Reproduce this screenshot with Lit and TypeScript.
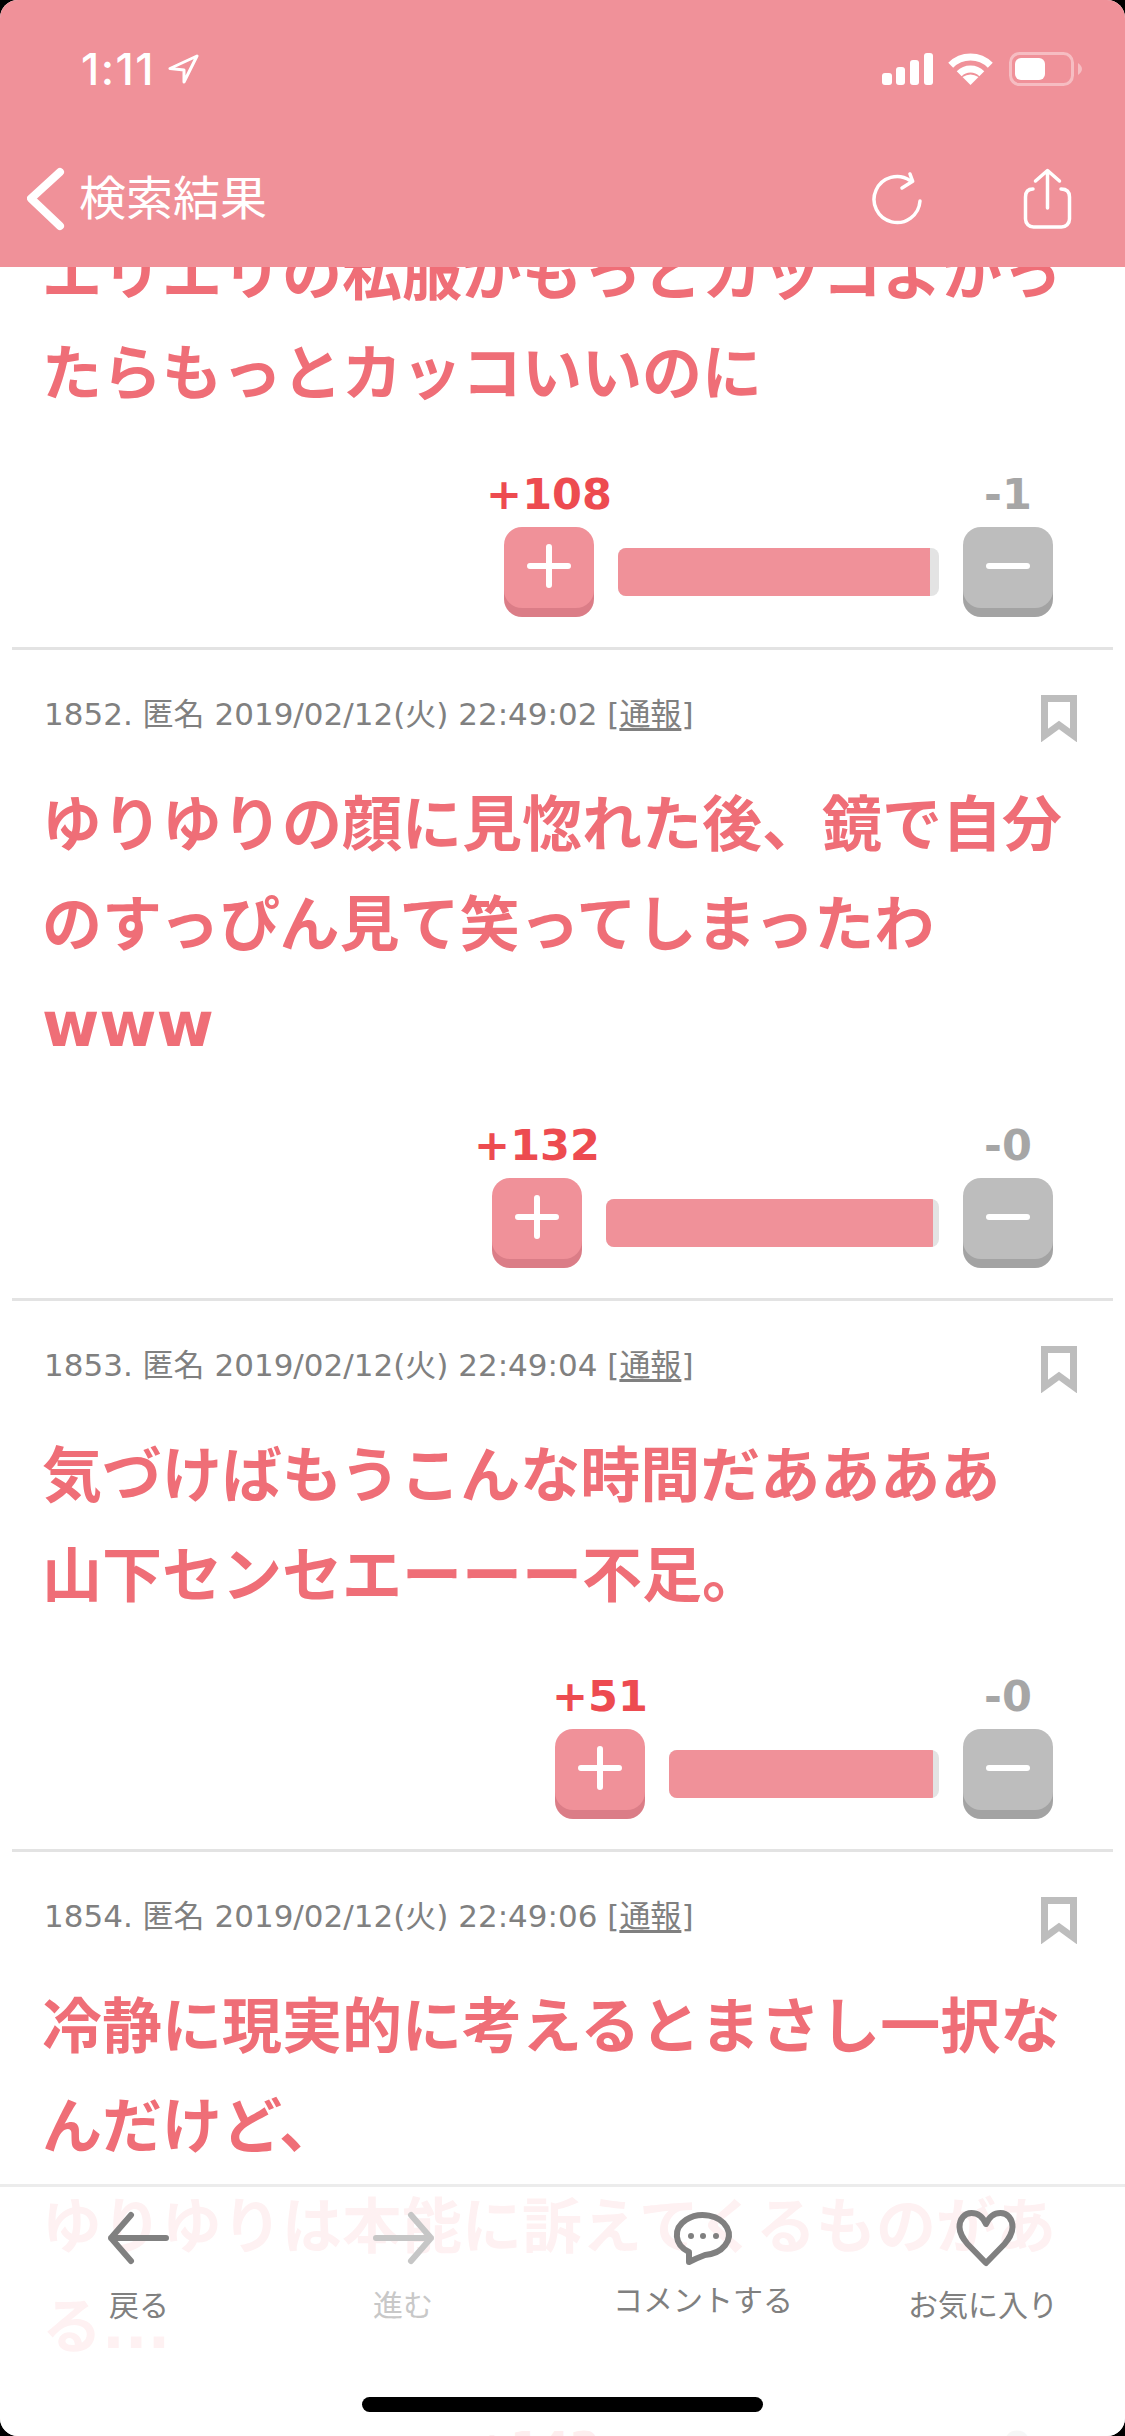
import { LitElement, html, svg, css } from 'lit';
import { customElement } from 'lit/decorators.js';

interface Post {
  no: number;
  time: string;
  lines: string[];
  up: number;
  down: number;
  barWidth: number;
  fillWidth: number;
}

const POSTS: Post[] = [
  {
    no: 1851,
    time: '22:49:00',
    lines: ['エリエリの私服がもっとカッコよかっ', 'たらもっとカッコいいのに'],
    up: 108,
    down: 1,
    barWidth: 321,
    fillWidth: 312,
  },
  {
    no: 1852,
    time: '22:49:02',
    lines: ['ゆりゆりの顔に見惚れた後、鏡で自分', 'のすっぴん見て笑ってしまったわ', 'www'],
    up: 132,
    down: 0,
    barWidth: 333,
    fillWidth: 327,
  },
  {
    no: 1853,
    time: '22:49:04',
    lines: ['気づけばもうこんな時間だああああ', '山下センセエーーー不足。'],
    up: 51,
    down: 0,
    barWidth: 270,
    fillWidth: 264,
  },
  {
    no: 1854,
    time: '22:49:06',
    lines: ['冷静に現実的に考えるとまさし一択な', 'んだけど、', 'ゆりゆりは本能に訴えてくるものがあ', 'る...'],
    up: 142,
    down: 0,
    barWidth: 333,
    fillWidth: 327,
  },
];

const ICON_PLUS = svg`<path d="M22 3V41M3 22H41" />`;
const ICON_MINUS = svg`<path d="M3 22H41" />`;

@customElement('app-root')
export class AppRoot extends LitElement {
  static styles = css`
    :host {
      display: block;
      width: 1125px;
      height: 2436px;
      background: #000;
      font-family: 'Noto Sans CJK JP', 'Noto Sans', sans-serif;
    }

    svg {
      display: block;
      fill: none;
      flex: none;
    }

    .screen {
      position: relative;
      height: 2436px;
      overflow: hidden;
      border-radius: 18px;
      background: #fff;
    }

    /* header */
    .header {
      position: absolute;
      top: 0;
      left: 0;
      right: 0;
      height: 267px;
      background: #f09199;
      color: #fff;
    }

    .status {
      display: flex;
      align-items: center;
      height: 138px;
      padding: 0 43px 0 81px;
    }

    .time {
      font-family: Inter, 'Liberation Sans', sans-serif;
      font-size: 44px;
      font-weight: 500;
      letter-spacing: 1.5px;
      line-height: 50px;
    }

    .location {
      margin-left: 12px;
    }

    .status-right {
      display: flex;
      align-items: center;
      margin-left: auto;
    }

    .wifi {
      margin: 0 16px 0 15px;
    }

    .nav {
      display: flex;
      align-items: center;
      height: 121px;
      padding: 0 49px 0 27px;
    }

    .title {
      margin: 0 0 8px 12px;
      font-size: 47px;
      line-height: 60px;
    }

    .nav-actions {
      display: flex;
      align-items: center;
      gap: 94px;
      margin-left: auto;
    }

    .stroke-white {
      stroke: #fff;
      stroke-linecap: round;
      stroke-linejoin: round;
    }

    /* posts */
    .list {
      padding-top: 99px;
    }

    .post {
      padding: 41px 44px 30px;
    }

    .meta {
      display: flex;
      justify-content: space-between;
      height: 44px;
      font-family: 'DejaVu Sans', 'Noto Sans CJK JP', sans-serif;
      font-size: 31px;
      line-height: 46px;
      color: #808080;
    }

    .meta u {
      text-underline-offset: 3px;
    }

    .bookmark {
      margin: 4px 4px 0 0;
      stroke: #bdbdbd;
      stroke-width: 7;
    }

    .body {
      margin: 40px 0 0 -2px;
      font-family: 'DejaVu Sans', 'Noto Sans CJK JP', sans-serif;
      font-size: 60px;
      font-weight: 700;
      line-height: 100px;
      color: #ef6e77;
    }

    .line {
      white-space: nowrap;
    }

    .line--latin {
      font-size: 62px;
    }

    .votes {
      display: flex;
      justify-content: flex-end;
      gap: 24px;
      margin-top: 48px;
      padding-right: 28px;
    }

    .vote {
      display: flex;
      flex-direction: column;
      align-items: center;
      width: 90px;
    }

    .count {
      font-family: 'DejaVu Sans', sans-serif;
      font-size: 43px;
      font-weight: 700;
      line-height: 44px;
      white-space: nowrap;
    }

    .count--up {
      color: #ed4b50;
    }

    .count--down {
      color: #a6a6a6;
    }

    .btn {
      display: flex;
      align-items: center;
      justify-content: center;
      width: 90px;
      height: 78px;
      margin: 11px 0 9px;
      padding-bottom: 3px;
      border-radius: 18px;
    }

    .btn svg {
      stroke: #fff;
      stroke-width: 6;
      stroke-linecap: round;
    }

    .btn--up {
      background: #f09199;
      box-shadow: 0 9px 0 #db7d87;
    }

    .btn--down {
      background: #bdbdbd;
      box-shadow: 0 9px 0 #a3a3a3;
    }

    .bar {
      align-self: flex-start;
      height: 48px;
      margin-top: 76px;
      border-radius: 8px;
      background: #e3e3e3;
      overflow: hidden;
    }

    .bar-fill {
      height: 100%;
      background: #f09199;
    }

    .divider {
      height: 3px;
      margin: 0 12px;
      background: #e3e3e3;
    }

    /* bottom tab bar */
    .tabbar {
      position: absolute;
      left: 0;
      right: 0;
      bottom: 0;
      height: 252px;
      display: flex;
      flex-direction: column;
      border-top: 3px solid #ececec;
      box-sizing: border-box;
      background: rgba(255, 255, 255, 0.9);
    }

    .tabs {
      display: grid;
      grid-template-columns: 278px 250px 350px 210px;
      padding-top: 22px;
    }

    .tab {
      display: flex;
      flex-direction: column;
      align-items: center;
      font-size: 30px;
      line-height: 40px;
      color: #808080;
    }

    .tab svg {
      stroke: #808080;
      stroke-width: 6;
      stroke-linecap: round;
      stroke-linejoin: round;
    }

    .tab span {
      margin-top: 14px;
    }

    .tab--comment span {
      margin-top: 9px;
    }

    .tab--disabled {
      color: #c8c8c8;
    }

    .tab--disabled svg {
      stroke: #c6c6c6;
    }

    .dots {
      fill: #808080;
      stroke: none;
    }

    .home {
      align-self: center;
      width: 401px;
      height: 15px;
      margin: auto 0 24px;
      border-radius: 8px;
      background: #000;
    }
  `;

  private _renderStatusBar() {
    return html`
      <div class="status">
        <span class="time">1:11</span>
        <svg class="location stroke-white" width="32" height="31" viewBox="-1 -1 32 31" stroke-width="3">
          <path d="M29 1 2 13.5 16 15 16 27Z" />
        </svg>
        <div class="status-right">
          <svg width="51" height="32" viewBox="0 0 51 32" style="fill:#fff">
            <rect x="0" y="20" width="10" height="12" rx="3" />
            <rect x="14" y="14" width="9" height="18" rx="3" />
            <rect x="28" y="7" width="9" height="25" rx="3" />
            <rect x="42" y="0" width="9" height="32" rx="3" />
          </svg>
          <svg class="wifi" width="45" height="32" viewBox="0 0 45 32">
            <path d="M2.7 12.2A28 28 0 0 1 42.3 12.2M11.2 20.7A16 16 0 0 1 33.8 20.7" stroke="#fff" stroke-width="7" />
            <path d="M22.5 32 14.5 24Q22.5 19 30.5 24Z" style="fill:#fff" />
          </svg>
          <svg width="73" height="34" viewBox="0 0 73 34">
            <rect x="1.5" y="1.5" width="62" height="31" rx="9" stroke="#fff" stroke-opacity="0.4" stroke-width="3" />
            <rect x="6" y="6" width="30" height="22" rx="6" style="fill:#fff" />
            <path d="M69 11Q73 14 73 17T69 23Z" style="fill:#fff" opacity="0.4" />
          </svg>
        </div>
      </div>
    `;
  }

  private _renderNav() {
    return html`
      <div class="nav">
        <svg class="stroke-white" width="40" height="64" viewBox="0 0 40 64" stroke-width="8">
          <path d="M33 5 4 31.5 33 59" />
        </svg>
        <span class="title">検索結果</span>
        <div class="nav-actions">
          <svg class="stroke-white" width="56" height="56" viewBox="0 0 56 56" stroke-width="3.5">
            <path d="M50 30A23 23 0 1 1 40 9.5" />
            <path d="M40 3 42.7 10.3 32 17" />
          </svg>
          <svg class="stroke-white" width="56" height="66" viewBox="0 0 56 66" stroke-width="3.5">
            <path d="M13 23Q5.5 23 5.5 31V53A8 8 0 0 0 13.5 61H41.5A8 8 0 0 0 49.5 53V31Q49.5 23 41 23" />
            <path d="M27.5 5V42M15.5 15 27.5 4.5 39.5 15" />
          </svg>
        </div>
      </div>
    `;
  }

  private _renderPost(post: Post) {
    return html`
      <div class="post">
        <div class="meta">
          <span>${post.no}. 匿名 2019/02/12(火) ${post.time} [<u>通報</u>]</span>
          <svg class="bookmark" width="36" height="47" viewBox="0 0 36 47">
            <path d="M3.5 3.5H32.5V40.5L18 30 3.5 40.5Z" />
          </svg>
        </div>
        <div class="body">
          ${post.lines.map((line) => html`<div class="line ${/^[a-z]+$/.test(line) ? 'line--latin' : ''}">${line}</div>`)}
        </div>
        <div class="votes">
          <div class="vote">
            <span class="count count--up">+${post.up}</span>
            <div class="btn btn--up"><svg width="44" height="44" viewBox="0 0 44 44">${ICON_PLUS}</svg></div>
          </div>
          <div class="bar" style="width:${post.barWidth}px">
            <div class="bar-fill" style="width:${post.fillWidth}px"></div>
          </div>
          <div class="vote">
            <span class="count count--down">-${post.down}</span>
            <div class="btn btn--down"><svg width="44" height="44" viewBox="0 0 44 44">${ICON_MINUS}</svg></div>
          </div>
        </div>
      </div>
      <div class="divider"></div>
    `;
  }

  private _renderTabs() {
    return html`
      <div class="tabbar">
        <div class="tabs">
          <div class="tab">
            <svg width="66" height="60" viewBox="0 0 66 60"><path d="M60 29H5M25 6 5 29 25 52" /></svg>
            <span>戻る</span>
          </div>
          <div class="tab tab--disabled">
            <svg width="66" height="60" viewBox="0 0 66 60"><path d="M6 29H61M41 6 61 29 41 52" /></svg>
            <span>進む</span>
          </div>
          <div class="tab tab--comment">
            <svg width="66" height="60" viewBox="0 0 66 60">
              <path d="M19 43V53Q27 49 35 46A26 20 0 1 0 19 43Z" />
              <circle class="dots" cx="21" cy="27" r="3" />
              <circle class="dots" cx="33" cy="27" r="3" />
              <circle class="dots" cx="46" cy="27" r="3" />
            </svg>
            <span>コメントする</span>
          </div>
          <div class="tab">
            <svg width="67" height="60" viewBox="-2.5 1 67 60">
              <path d="M33.5 16C30 8 24 5 19 5 12 5 7 11 7 19 7 26 11 31 15 36L33.5 55 52 36C56 31 60 26 60 19 60 11 55 5 48 5 43 5 37 8 33.5 16Z" />
            </svg>
            <span>お気に入り</span>
          </div>
        </div>
        <div class="home"></div>
      </div>
    `;
  }

  render() {
    return html`
      <div class="screen">
        <div class="list">${POSTS.map((post) => this._renderPost(post))}</div>
        <div class="header">
          ${this._renderStatusBar()}
          ${this._renderNav()}
        </div>
        ${this._renderTabs()}
      </div>
    `;
  }
}
